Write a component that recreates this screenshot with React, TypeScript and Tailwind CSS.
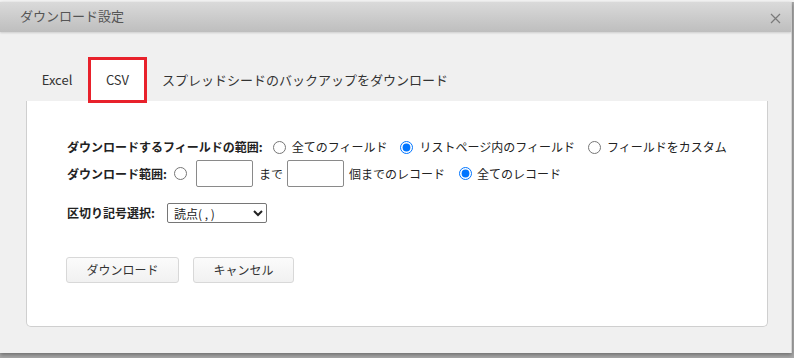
import { useState } from "react"

const font = "font-['Noto_Sans_CJK_JP','Noto_Sans',sans-serif]"

const Radio = ({ checked, onChange }: { checked: boolean; onChange: () => void }) => (
  <input
    type="radio"
    checked={checked}
    onChange={onChange}
    className="m-0 w-[13px] h-[13px] accent-[#0075ff] shrink-0"
  />
)

const App = () => {
  const [fields, setFields] = useState("list")
  const [range, setRange] = useState("all")

  return (
    <div className={`w-[794px] h-[358px] overflow-hidden bg-[#a9a9a9] ${font}`}>
      <div className="h-[2px] bg-[#f4f4f4]" />
      <div className="w-[792px] h-[351px] flex flex-col bg-[#f0f0f0] border-r border-[#d4d4d4] shadow-[0_2px_4px_rgba(0,0,0,0.35)]">
        {/* header */}
        <div className="h-[30px] flex items-center justify-between px-[20px] pb-[3px] bg-gradient-to-b from-[#dadada] to-[#bebebe] shadow-[0_1px_2px_rgba(0,0,0,0.15)]">
          <span className="text-[13px] text-[#555] leading-none">ダウンロード設定</span>
          <svg width="11" height="11" viewBox="0 0 11 11" className="mr-[-10px] mt-[5px]">
            <path d="M1 1L10 10M10 1L1 10" stroke="#7a7a7a" strokeWidth="1.2" />
          </svg>
        </div>

        {/* tabs */}
        <div className="mt-[25px] ml-[26px] flex items-center h-[46px] text-[13px] text-[#333] relative z-10">
          <div className="w-[62px] text-center">Excel</div>
          <div className="w-[59px] h-[46px] flex items-center justify-center bg-white border-[3px] border-[#e8212b]">
            CSV
          </div>
          <div className="pl-[15px]">スプレッドシードのバックアップをダウンロード</div>
        </div>

        {/* panel */}
        <div className="-mt-[2px] ml-[26px] w-[742px] h-[226px] bg-white border border-t-0 border-[#cfcfcf] rounded-b-[5px] pl-[40px] pt-[36px] text-[12px] text-[#222]">
          <div className="flex items-center h-[20px]">
            <span className="font-bold mr-[10px]">ダウンロードするフィールドの範囲:</span>
            <Radio checked={fields === "all"} onChange={() => setFields("all")} />
            <span className="ml-[6px] mr-[13px]">全てのフィールド</span>
            <Radio checked={fields === "list"} onChange={() => setFields("list")} />
            <span className="ml-[6px] mr-[13px]">リストページ内のフィールド</span>
            <Radio checked={fields === "custom"} onChange={() => setFields("custom")} />
            <span className="ml-[6px]">フィールドをカスタム</span>
          </div>

          <div className="flex items-center mt-[3px] h-[27px]">
            <span className="font-bold mr-[7px]">ダウンロード範囲:</span>
            <Radio checked={range === "limit"} onChange={() => setRange("limit")} />
            <input className="ml-[9px] w-[57px] h-[27px] border border-[#8a8a8a] rounded-[2px] px-1 outline-none" />
            <span className="ml-[6px] mr-[4px]">まで</span>
            <input className="w-[57px] h-[27px] border border-[#8a8a8a] rounded-[2px] px-1 outline-none" />
            <span className="ml-[5px] mr-[14px]">個までのレコード</span>
            <Radio checked={range === "all"} onChange={() => setRange("all")} />
            <span className="ml-[5px]">全てのレコード</span>
          </div>

          <div className="flex items-center mt-[16px] h-[20px]">
            <span className="font-bold mr-[12px]">区切り記号選択:</span>
            <select className={`w-[100px] h-[20px] border border-[#767676] rounded-[2px] text-[12px] pl-[2px] bg-white ${font}`}>
              <option>読点( , )</option>
              <option>タブ</option>
              <option>セミコロン( ; )</option>
            </select>
          </div>

          <div className="flex gap-[14px] mt-[34px] -ml-[1px]">
            <button className="w-[113px] h-[26px] rounded-[3px] border border-[#d8d8d8] bg-gradient-to-b from-[#fbfbfb] to-[#f1f1f1] text-[12px] text-[#333]">
              ダウンロード
            </button>
            <button className="w-[101px] h-[26px] rounded-[3px] border border-[#d8d8d8] bg-gradient-to-b from-[#fbfbfb] to-[#f1f1f1] text-[12px] text-[#333]">
              キャンセル
            </button>
          </div>
        </div>
      </div>
    </div>
  )
}

export default App
